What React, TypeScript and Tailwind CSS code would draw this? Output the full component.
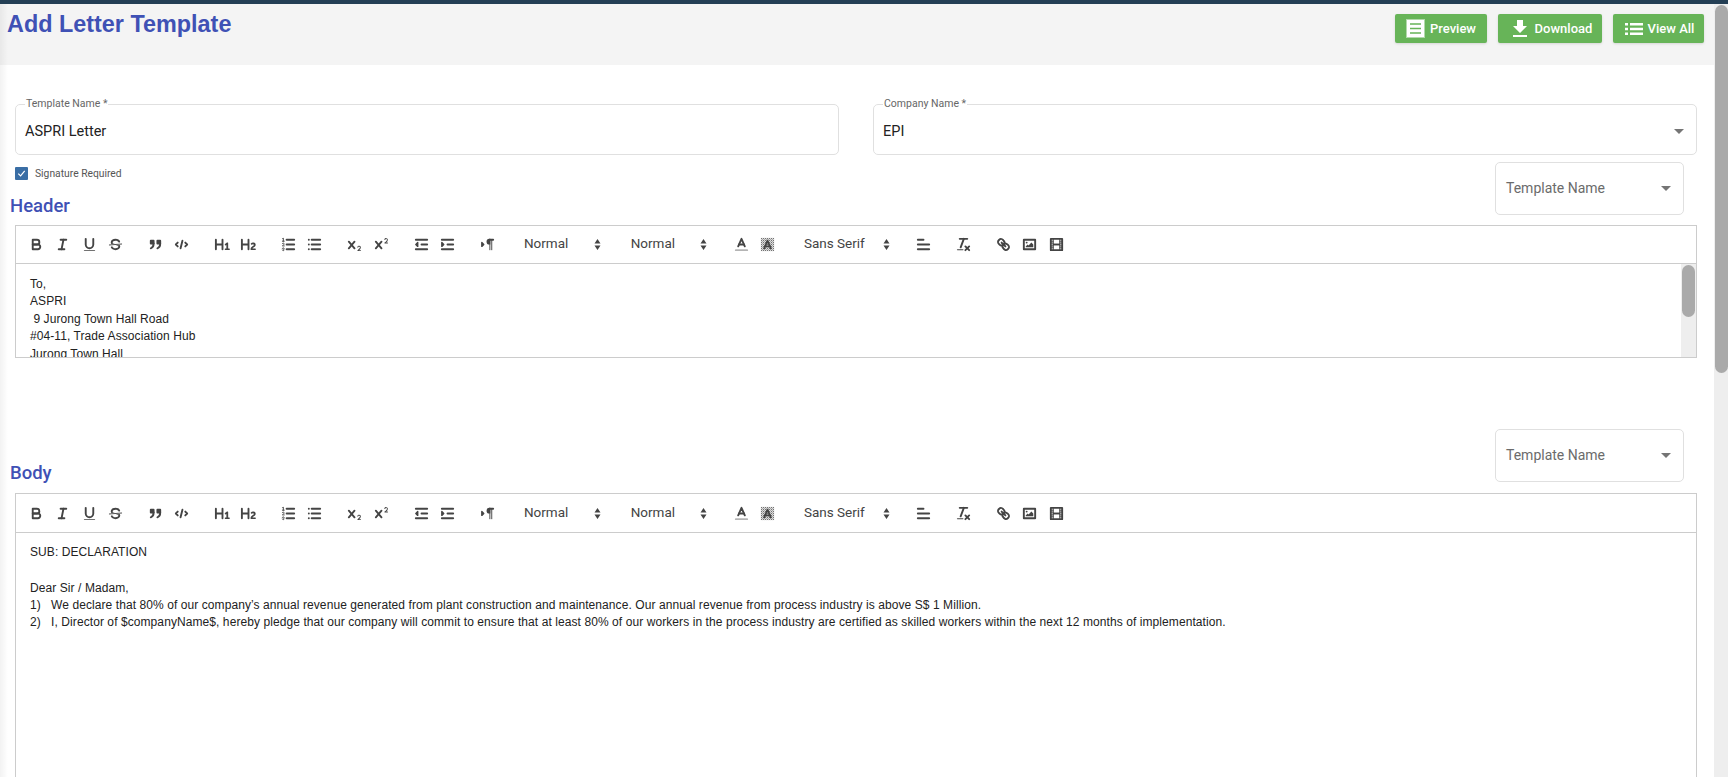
import type { ReactNode } from "react";

const F = { fill: "#444", stroke: "none" };
const THIN = { strokeWidth: 1 };

const Ico = ({ children }: { children: ReactNode }) => (
    <svg viewBox="0 0 18 18" className="w-[17px] h-[17px]" fill="none" stroke="#444" strokeWidth={2} strokeLinecap="round" strokeLinejoin="round">
        {children}
    </svg>
);

const icons: Record<string, ReactNode> = {
    bold: (
        <>
            <path d="M5,4H9.5A2.5,2.5,0,0,1,12,6.5v0A2.5,2.5,0,0,1,9.5,9H5A0,0,0,0,1,5,9V4A0,0,0,0,1,5,4Z" />
            <path d="M5,9h5.5A2.5,2.5,0,0,1,13,11.5v0A2.5,2.5,0,0,1,10.5,14H5a0,0,0,0,1,0,0V9A0,0,0,0,1,5,9Z" />
        </>
    ),
    italic: (
        <>
            <line x1="7" x2="13" y1="4" y2="4" />
            <line x1="5" x2="11" y1="14" y2="14" />
            <line x1="8" x2="10" y1="14" y2="4" />
        </>
    ),
    underline: (
        <>
            <path d="M5,3V9a4.012,4.012,0,0,0,4,4H9a4.012,4.012,0,0,0,4-4V3" />
            <rect {...F} height="1" rx=".5" ry=".5" width="12" x="3" y="15" />
        </>
    ),
    strike: (
        <>
            <line {...THIN} x1="15.5" x2="2.5" y1="8.5" y2="9.5" />
            <path {...F} d="M9.007,8C6.542,7.791,6,7.519,6,6.5,6,5.792,7.283,5,9,5c1.571,0,2.765.679,2.969,1.309a1,1,0,0,0,1.9-.617C13.356,4.106,11.354,3,9,3,6.2,3,4,4.538,4,6.5a3.2,3.2,0,0,0,.5,1.843Z" />
            <path {...F} d="M8.984,10C11.457,10.208,12,10.479,12,11.5c0,.708-1.283,1.5-3,1.5-1.571,0-2.765-.679-2.969-1.309a1,1,0,1,0-1.9.617C4.644,13.894,6.646,15,9,15c2.8,0,5-1.538,5-3.5a3.2,3.2,0,0,0-.5-1.843Z" />
        </>
    ),
    quote: (
        <>
            <rect fill="#444" height="3" width="3" x="4" y="5" />
            <rect fill="#444" height="3" width="3" x="11" y="5" />
            <path d="M7,8c0,4.031-3,5-3,5" />
            <path d="M14,8c0,4.031-3,5-3,5" />
        </>
    ),
    code: (
        <>
            <polyline points="5 7 3 9 5 11" />
            <polyline points="13 7 15 9 13 11" />
            <line x1="10" x2="8" y1="5" y2="13" />
        </>
    ),
    h1: <path {...F} d="M10,4V14a1,1,0,0,1-2,0V10H3v4a1,1,0,0,1-2,0V4A1,1,0,0,1,3,4V8H8V4a1,1,0,0,1,2,0Zm6.06787,9.209H14.98975V7.59863a.54085.54085,0,0,0-.605-.60547h-.62744a1.01119,1.01119,0,0,0-.748.29688L11.645,8.56641a.5435.5435,0,0,0-.022.8584l.28613.30762a.53861.53861,0,0,0,.84717.0332l.09912-.08789a1.2137,1.2137,0,0,0,.2417-.35254h.02246s-.01123.30859-.01123.60547V13.209H12.041a.54085.54085,0,0,0-.605.60547v.43945a.54085.54085,0,0,0,.605.60547h4.02686a.54085.54085,0,0,0,.605-.60547v-.43945A.54085.54085,0,0,0,16.06787,13.209Z" />,
    h2: <path {...F} d="M16.73975,13.81445v.43945a.54085.54085,0,0,1-.605.60547H11.855a.58392.58392,0,0,1-.64893-.60547V14.0127c0-2.90527,3.39941-3.42187,3.39941-4.55469a.77675.77675,0,0,0-.84717-.78125,1.17684,1.17684,0,0,0-.83594.38477c-.2749.26367-.561.374-.85791.13184l-.4292-.34082c-.30811-.24219-.38525-.51758-.1543-.81445a2.97155,2.97155,0,0,1,2.45361-1.17676,2.45393,2.45393,0,0,1,2.68408,2.40918c0,2.45312-3.1792,2.92676-3.27832,3.93848h2.79443A.54085.54085,0,0,1,16.73975,13.81445ZM9,3A.99974.99974,0,0,0,8,4V8H3V4A1,1,0,0,0,1,4V14a1,1,0,0,0,2,0V10H8v4a1,1,0,0,0,2,0V4A.99974.99974,0,0,0,9,3Z" />,
    ordered: (
        <>
            <line x1="7" x2="15" y1="4" y2="4" />
            <line x1="7" x2="15" y1="9" y2="9" />
            <line x1="7" x2="15" y1="14" y2="14" />
            <line {...THIN} x1="2.5" x2="4.5" y1="5.5" y2="5.5" />
            <path {...F} d="M3.5,6A0.5,0.5,0,0,1,3,5.5V3.085l-0.276.138A0.5,0.5,0,0,1,2.053,3c-0.124-.247-0.023-0.324.224-0.447l1-.5A0.5,0.5,0,0,1,4,2.5v3A0.5,0.5,0,0,1,3.5,6Z" />
            <path {...THIN} d="M4.5,10.5h-2c0-.234,1.85-1.076,1.85-2.234A0.959,0.959,0,0,0,2.5,8.156" />
            <path {...THIN} d="M2.5,14.846a0.959,0.959,0,0,0,1.85-.109A0.7,0.7,0,0,0,3.75,14a0.688,0.688,0,0,0,.6-0.736,0.959,0.959,0,0,0-1.85-.109" />
        </>
    ),
    bullet: (
        <>
            <line x1="6" x2="15" y1="4" y2="4" />
            <line x1="6" x2="15" y1="9" y2="9" />
            <line x1="6" x2="15" y1="14" y2="14" />
            <line x1="3" x2="3" y1="4" y2="4" />
            <line x1="3" x2="3" y1="9" y2="9" />
            <line x1="3" x2="3" y1="14" y2="14" />
        </>
    ),
    sub: (
        <>
            <path {...F} d="M15.5,15H13.861a3.858,3.858,0,0,0,1.914-2.975,1.8,1.8,0,0,0-1.6-1.751A1.921,1.921,0,0,0,12.021,11.7a0.50013,0.50013,0,1,0,.957.291h0a0.914,0.914,0,0,1,1.053-.725,0.81,0.81,0,0,1,.744.762c0,1.076-1.16971,1.86982-1.93971,2.43082A1.45639,1.45639,0,0,0,12,15.5a0.5,0.5,0,0,0,.5.5h3A0.5,0.5,0,0,0,15.5,15Z" />
            <path {...F} d="M9.65,5.241a1,1,0,0,0-1.409.108L6,7.964,3.759,5.349A1,1,0,0,0,2.192,6.59178Q2.2,6.6,2.241,6.651L4.684,9.5,2.241,12.35A1,1,0,0,0,3.71,13.70722q0.02557-.02768.049-0.05722L6,11.036,8.241,13.65a1,1,0,1,0,1.567-1.24277Q9.8,12.4,9.759,12.35L7.316,9.5,9.759,6.651A1,1,0,0,0,9.65,5.241Z" />
        </>
    ),
    sup: (
        <>
            <path {...F} d="M15.5,7H13.861a4.015,4.015,0,0,0,1.914-2.975,1.8,1.8,0,0,0-1.6-1.751A1.922,1.922,0,0,0,12.021,3.7a0.5,0.5,0,1,0,.957.291,0.917,0.917,0,0,1,1.053-.725,0.81,0.81,0,0,1,.744.762c0,1.077-1.164,1.925-1.934,2.486A1.423,1.423,0,0,0,12,7.5a0.5,0.5,0,0,0,.5.5h3A0.5,0.5,0,0,0,15.5,7Z" />
            <path {...F} d="M9.651,5.241a1,1,0,0,0-1.41.108L6,7.964,3.759,5.349a1,1,0,1,0-1.519,1.3L4.683,9.5,2.241,12.35a1,1,0,1,0,1.519,1.3L6,11.036l2.241,2.614a1,1,0,0,0,1.519-1.3L7.317,9.5,9.759,6.651A1,1,0,0,0,9.651,5.241Z" />
        </>
    ),
    outdent: (
        <>
            <line x1="3" x2="15" y1="14" y2="14" />
            <line x1="3" x2="15" y1="4" y2="4" />
            <line x1="9" x2="15" y1="9" y2="9" />
            <polyline fill="#444" strokeWidth={1.5} points="5 7 5 11 3 9 5 7" />
        </>
    ),
    indent: (
        <>
            <line x1="3" x2="15" y1="14" y2="14" />
            <line x1="3" x2="15" y1="4" y2="4" />
            <line x1="9" x2="15" y1="9" y2="9" />
            <polyline fill="#444" strokeWidth={1.5} points="3 7 3 11 5 9 3 7" />
        </>
    ),
    rtl: (
        <>
            <polygon fill="#444" strokeWidth={1.5} points="3 11 5 9 3 7 3 11" />
            <line x1="15" x2="11" y1="4" y2="4" />
            <path {...F} d="M11,3a3,3,0,0,0,0,6h1V3H11Z" />
            <rect {...F} height="11" width="1" x="11" y="4" />
            <rect {...F} height="11" width="1" x="13" y="4" />
        </>
    ),
    color: (
        <>
            <line stroke="#444" strokeOpacity={0.4} x1="3" x2="15" y1="15" y2="15" />
            <polyline points="5.5 11 9 3 12.5 11" />
            <line x1="11.63" x2="6.38" y1="9" y2="9" />
        </>
    ),
    background: (
        <>
            <defs>
                <pattern id="bg-dots" width="2.118" height="2.118" patternUnits="userSpaceOnUse">
                    <rect {...F} width="1.059" height="1.059" shapeRendering="crispEdges" />
                    <rect {...F} x="1.059" y="1.059" width="1.059" height="1.059" shapeRendering="crispEdges" />
                </pattern>
            </defs>
            <rect stroke="none" fill="url(#bg-dots)" opacity={0.75} x="2" y="2" width="14" height="14" />
            <polyline points="5.5 13 9 5 12.5 13" />
            <line x1="11.63" x2="6.38" y1="11" y2="11" />
        </>
    ),
    align: (
        <>
            <line x1="3" x2="15" y1="9" y2="9" />
            <line x1="3" x2="15" y1="14" y2="14" />
            <line x1="3" x2="9" y1="4" y2="4" />
        </>
    ),
    clean: (
        <>
            <line x1="5" x2="13" y1="3" y2="3" />
            <line x1="6" x2="9.35" y1="12" y2="3" />
            <line x1="11" x2="15" y1="11" y2="15" />
            <line x1="15" x2="11" y1="11" y2="15" />
            <rect {...F} height="1" rx=".5" ry=".5" width="7" x="2" y="14" />
        </>
    ),
    link: (
        <>
            <line x1="7" x2="11" y1="7" y2="11" />
            <path d="M8.9,4.577a3.476,3.476,0,0,1,.36,4.679A3.476,3.476,0,0,1,4.577,8.9C3.185,7.5,2.035,6.4,4.217,4.217S7.5,3.185,8.9,4.577Z" />
            <path d="M13.423,9.1a3.476,3.476,0,0,0-4.679-.36,3.476,3.476,0,0,0,.36,4.679c1.392,1.392,2.5,2.542,4.679.36S14.815,10.5,13.423,9.1Z" />
        </>
    ),
    image: (
        <>
            <rect height="10" width="12" x="3" y="4" />
            <circle {...F} cx="6" cy="7" r="1" />
            <polyline {...F} points="5 12 5 11 7 9 8 10 11 7 13 9 13 12 5 12" />
        </>
    ),
    video: (
        <>
            <rect height="12" width="12" x="3" y="3" />
            <rect {...F} height="12" width="1" x="5" y="3" />
            <rect {...F} height="12" width="1" x="12" y="3" />
            <rect {...F} height="2" width="8" x="5" y="8" />
            <rect {...F} height="1" width="3" x="3" y="5" />
            <rect {...F} height="1" width="3" x="3" y="7" />
            <rect {...F} height="1" width="3" x="3" y="10" />
            <rect {...F} height="1" width="3" x="3" y="12" />
            <rect {...F} height="1" width="3" x="12" y="5" />
            <rect {...F} height="1" width="3" x="12" y="7" />
            <rect {...F} height="1" width="3" x="12" y="10" />
            <rect {...F} height="1" width="3" x="12" y="12" />
        </>
    ),
};

const IconGroup = ({ names }: { names: string[] }) => (
    <div className="flex items-center">
        {names.map((name) => (
            <span key={name} className="w-[26.3px] h-6 flex items-center justify-center">
                <Ico>{icons[name]}</Ico>
            </span>
        ))}
    </div>
);

const Picker = ({ label, width }: { label: string; width: string }) => (
    <div className={`${width} h-6 pl-[9.400px] flex items-center justify-between text-[13.5px] leading-[20px] text-[#444]`}>
        <span className="-mt-[3px]">{label}</span>
        <svg viewBox="0 0 6 11" className="w-[7px] h-[11px] mr-[7px]" fill="#444">
            <path d="M3 0 6 4.500H0ZM3 11 0 6.500H6Z" />
        </svg>
    </div>
);

const Toolbar = ({ height }: { height: string }) => (
    <div className={`flex items-center gap-[13.8px] pl-[7.500px] ${height}`}>
        <IconGroup names={["bold", "italic", "underline", "strike"]} />
        <IconGroup names={["quote", "code"]} />
        <IconGroup names={["h1", "h2"]} />
        <IconGroup names={["ordered", "bullet"]} />
        <IconGroup names={["sub", "sup"]} />
        <IconGroup names={["outdent", "indent"]} />
        <IconGroup names={["rtl"]} />
        <Picker label="Normal" width="w-[93px]" />
        <Picker label="Normal" width="w-[93px]" />
        <IconGroup names={["color", "background"]} />
        <Picker label="Sans Serif" width="w-[102px]" />
        <IconGroup names={["align"]} />
        <IconGroup names={["clean"]} />
        <IconGroup names={["link", "image", "video"]} />
    </div>
);

const Caret = () => (
    <span className="w-0 h-0 border-x-[5px] border-x-transparent border-t-[5px] border-t-[#757575]"></span>
);

const TemplateSelect = () => (
    <div className="w-[189px] h-[53px] shrink-0 border border-[#e0e0e0] rounded-[5px] pl-[10px] pr-[12px] flex items-center justify-between text-[14px] text-[#6b6b6b]">
        <span>Template Name</span>
        <Caret />
    </div>
);

const Field = ({ label, value, caret }: { label: string; value: string; caret?: boolean }) => (
    <fieldset className="flex-1 h-[56px] border border-[#e0e0e0] rounded-[5px] pl-[9px] pr-[12px]">
        <legend className="px-[1px] text-[10.500px] leading-[10px] text-[#666]">{label}</legend>
        <div className="h-[45px] flex items-center justify-between text-[14.500px] text-[#222]">
            <span>{value}</span>
            {caret && <Caret />}
        </div>
    </fieldset>
);

const EditorLines = ({ lines, className }: { lines: string[]; className: string }) => (
    <div className={`${className} pl-[14px] text-[12px] tracking-[0.08px] text-[#222] font-['Liberation_Sans',sans-serif] whitespace-pre`}>
        {lines.map((line, i) => (
            <p key={i} className={line ? "" : "h-[18.500px]"}>{line}</p>
        ))}
    </div>
);

const headerLines = ["To,", "ASPRI", " 9 Jurong Town Hall Road", "#04-11, Trade Association Hub", "Jurong Town Hall"];

const bodyLines = [
    "SUB: DECLARATION",
    "",
    "Dear Sir / Madam,",
    "1)   We declare that 80% of our company’s annual revenue generated from plant construction and maintenance. Our annual revenue from process industry is above S$ 1 Million.",
    "2)   I, Director of $companyName$, hereby pledge that our company will commit to ensure that at least 80% of our workers in the process industry are certified as skilled workers within the next 12 months of implementation.",
];

const App = () => {
    return (
        <div className="relative h-screen overflow-hidden bg-white font-['Roboto',sans-serif]">
            <div className="h-1 bg-[#243f55]"></div>

            <div className="flex h-[773px]">
                <main className="flex-1 min-w-0 overflow-hidden">
                    <div className="h-[61px] bg-[#f4f4f4] pl-[7px] pr-[10px] flex justify-between items-start">
                        <h1 className="mt-[4px] text-[23.400px] leading-[32px] font-bold text-[#3f51b5] font-['Liberation_Sans',sans-serif]">Add Letter Template</h1>

                        <div className="mt-[10px] flex gap-[11px]">
                            <button className="h-[29px] w-[92px] rounded-[2px] bg-[#67b458] shadow-sm text-white text-[13px] font-medium flex items-center justify-center gap-[5px]">
                                <svg viewBox="0 0 19 19" className="w-[19px] h-[19px]">
                                    <rect x="1" y="1" width="17" height="17" fill="#fff" />
                                    <rect x=".5" y=".5" width="18" height="18" fill="none" stroke="#fff" strokeDasharray="1 1" />
                                    <path d="M4 5H15M4 9.500H15M4 14H15" stroke="#67b458" strokeWidth="1.600" />
                                </svg>
                                Preview
                            </button>
                            <button className="h-[29px] w-[104px] rounded-[2px] bg-[#67b458] shadow-sm text-white text-[13px] font-medium flex items-center justify-center gap-[3px]">
                                <svg viewBox="0 0 24 24" className="w-6 h-6" fill="#fff">
                                    <path d="M19 9h-4V3H9v6H5l7 7 7-7zM5 18v2h14v-2H5z" />
                                </svg>
                                Download
                            </button>
                            <button className="h-[29px] w-[91px] pl-[2px] rounded-[2px] bg-[#67b458] shadow-sm text-white text-[13px] font-medium flex items-center justify-center gap-[5px]">
                                <svg viewBox="0 0 18 12" className="w-[18px] h-3" fill="#fff">
                                    <path d="M0 0H3V2.600H0ZM5 0H18V2.600H5ZM0 4.700H3V7.300H0ZM5 4.700H18V7.300H5ZM0 9.400H3V12H0ZM5 9.400H18V12H5Z" />
                                </svg>
                                View All
                            </button>
                        </div>
                    </div>

                    <div className="pl-[15px] pr-[17px] pt-[34px]">
                        <div className="flex gap-[34px]">
                            <Field label="Template Name *" value="ASPRI Letter" />
                            <Field label="Company Name *" value="EPI" caret />
                        </div>

                        <div className="flex justify-between items-start pr-[13px] mt-[7px]">
                            <div>
                                <label className="flex items-center gap-[7px] h-[13px] mt-[5px] text-[10.300px] text-[#555]">
                                    <span className="w-[13px] h-[13px] rounded-[1px] bg-[#3a6ea5] flex items-center justify-center">
                                        <svg viewBox="0 0 12 12" className="w-[11px] h-[11px]" fill="none" stroke="#fff" strokeWidth="1.300">
                                            <path d="M2.500 6.200 5 8.700 9.500 3.200" />
                                        </svg>
                                    </span>
                                    Signature Required
                                </label>
                                <h2 className="-ml-[5px] mt-[14px] text-[18.500px] leading-[24px] font-medium text-[#3f51b5]">Header</h2>
                            </div>
                            <TemplateSelect />
                        </div>

                        <div className="mt-[7px] border border-[#ccc]">
                            <Toolbar height="h-[37px]" />
                            <div className="relative h-[94px] overflow-hidden border-t border-[#ccc]">
                                <EditorLines lines={headerLines} className="pt-3 leading-[17.4px]" />
                                <div className="absolute right-0 top-0 bottom-0 w-[15px] bg-[#eee]">
                                    <div className="mx-[1px] mt-[1px] h-[52px] rounded-full bg-[#aaa]"></div>
                                </div>
                            </div>
                        </div>

                        <div className="flex justify-between items-start pr-[13px] mt-[71px]">
                            <h2 className="-ml-[5px] mt-[32px] text-[18.500px] leading-[24px] font-medium text-[#3f51b5]">Body</h2>
                            <TemplateSelect />
                        </div>

                        <div className="mt-[8px] h-[400px] border border-[#ccc]">
                            <Toolbar height="h-[38px]" />
                            <div className="border-t border-[#ccc]">
                                <EditorLines lines={bodyLines} className="pt-[11px] leading-[17.04px]" />
                            </div>
                        </div>
                    </div>
                </main>

                <div className="w-[14px] shrink-0 pl-[1px] bg-[#eee]">
                    <div className="mt-[1px] h-[368px] rounded-[7px] bg-[#aaa]"></div>
                </div>
            </div>

            <div className="absolute left-0 top-1 bottom-0 w-2 pointer-events-none bg-gradient-to-r from-black/5 to-transparent"></div>
        </div>
    );
};

export default App;
